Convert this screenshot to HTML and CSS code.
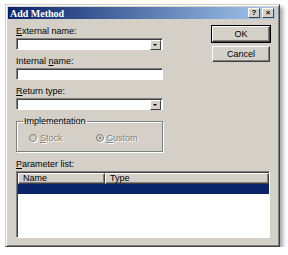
FILE: index.html
```html
<!DOCTYPE html>
<html lang="en">
<head>
  <meta charset="UTF-8" />
  <title>Add Method</title>
  <link rel="stylesheet" href="styles.css">
</head>
<body>
  <div class="window">
    <div class="titlebar">
      <span class="title">Add Method</span>
      <span class="tbtn">?</span>
      <span class="tbtn close">&#215;</span>
    </div>

    <div class="client">
      <div class="top">
        <div class="fields">
          <label><u>E</u>xternal name:</label>
          <div class="combo"><span class="arrow"></span></div>

          <label>Internal <u>n</u>ame:</label>
          <div class="textbox"></div>

          <label><u>R</u>eturn type:</label>
          <div class="combo"><span class="arrow"></span></div>

          <fieldset class="group">
            <legend>Implementation</legend>
            <div class="radios">
              <span class="radio"><i class="dot"></i><span class="dis"><u>S</u>tock</span></span>
              <span class="radio"><i class="dot on"></i><span class="dis"><u>C</u>ustom</span></span>
            </div>
          </fieldset>
        </div>

        <div class="buttons">
          <div class="btn default">OK</div>
          <div class="btn">Cancel</div>
        </div>
      </div>

      <label class="plabel"><u>P</u>arameter list:</label>
      <div class="list">
        <div class="header">
          <span class="col name">Name</span>
          <span class="col type">Type</span>
        </div>
        <div class="row selected"></div>
      </div>
    </div>
  </div>
</body>
</html>
```

FILE: styles.css
```css
body {
  margin: 0;
  background: #fff;
  font-family: "Liberation Sans", Arial, sans-serif;
  font-size: 9px;
  color: #000;
}

.window {
  margin: 4px 0 0 5px;
  width: 275px;
  height: 243px;
  box-sizing: border-box;
  background: #d4d0c8;
  border: 1px solid;
  border-color: #d4d0c8 #404040 #404040 #d4d0c8;
  box-shadow: inset 1px 1px #fff, inset -1px -1px #808080, 3px 3px 4px rgba(0, 0, 0, 0.35);
  padding: 2px 3px 3px 2px;
}

.titlebar {
  height: 12px;
  display: flex;
  align-items: center;
  padding: 0 2px 0 2px;
  background: linear-gradient(to right, #0a246a, #a6caf0);
}

.title {
  flex: 1;
  color: #fff;
  font-weight: bold;
  font-size: 10px;
  font-family: "Liberation Serif", serif;
}

.tbtn {
  width: 10px;
  height: 8px;
  margin-left: 2px;
  background: #d4d0c8;
  border: 1px solid;
  border-color: #fff #404040 #404040 #fff;
  font-size: 8px;
  line-height: 8px;
  font-weight: bold;
  text-align: center;
}

.client {
  padding: 7px 6px 0 8px;
}

.top {
  display: flex;
  justify-content: space-between;
}

.fields {
  width: 147px;
}

label {
  display: block;
  line-height: 10px;
  margin-bottom: 2px;
}

.combo,
.textbox {
  height: 12px;
  box-sizing: border-box;
  background: #fff;
  border: 1px solid;
  border-color: #808080 #fff #fff #808080;
  box-shadow: inset 1px 1px #404040;
  margin-bottom: 6px;
  position: relative;
}

.arrow {
  position: absolute;
  right: 1px;
  top: 1px;
  width: 9px;
  height: 8px;
  background: #d4d0c8;
  border: 1px solid;
  border-color: #fff #404040 #404040 #fff;
  box-sizing: content-box;
}

.arrow::after {
  content: "";
  position: absolute;
  left: 2px;
  top: 3px;
  border-left: 2px solid transparent;
  border-right: 2px solid transparent;
  border-top: 2px solid #000;
}

.group {
  margin: 2px 0 0;
  padding: 7px 0 5px 12px;
  border: 1px solid #808080;
  box-shadow: 1px 1px #fff, inset 1px 1px #fff;
  height: 22px;
}

.group legend {
  padding: 0 1px;
  margin-left: -6px;
  line-height: 10px;
}

.radios {
  display: flex;
  gap: 33px;
}

.radio {
  display: flex;
  align-items: center;
  gap: 3px;
}

.dot {
  width: 6px;
  height: 6px;
  border-radius: 50%;
  border: 1px solid #808080;
  background: #d4d0c8;
  box-shadow: 1px 1px #fff;
  position: relative;
}

.dot.on::after {
  content: "";
  position: absolute;
  left: 2px;
  top: 2px;
  width: 2px;
  height: 2px;
  background: #808080;
}

.dis {
  color: #808080;
  text-shadow: 1px 1px #fff;
}

.buttons {
  display: flex;
  flex-direction: column;
  gap: 4px;
}

.btn {
  width: 56px;
  height: 14px;
  line-height: 14px;
  text-align: center;
  border: 1px solid;
  border-color: #fff #404040 #404040 #fff;
  box-shadow: inset -1px -1px #808080;
}

.btn.default {
  outline: 1px solid #000;
}

.plabel {
  margin-top: 7px;
}

.list {
  height: 67px;
  width: 254px;
  background: #fff;
  border: 1px solid;
  border-color: #808080 #fff #fff #808080;
  box-shadow: inset 1px 1px #404040;
  padding: 1px 0 0 1px;
  box-sizing: border-box;
}

.header {
  display: flex;
  height: 11px;
}

.col {
  background: #d4d0c8;
  border: 1px solid;
  border-color: #fff #404040 #404040 #fff;
  box-shadow: inset -1px -1px #808080;
  line-height: 9px;
  padding-left: 4px;
  box-sizing: border-box;
}

.name {
  width: 87px;
}

.type {
  flex: 1;
}

.row.selected {
  height: 10px;
  background: #0a246a;
}
```
